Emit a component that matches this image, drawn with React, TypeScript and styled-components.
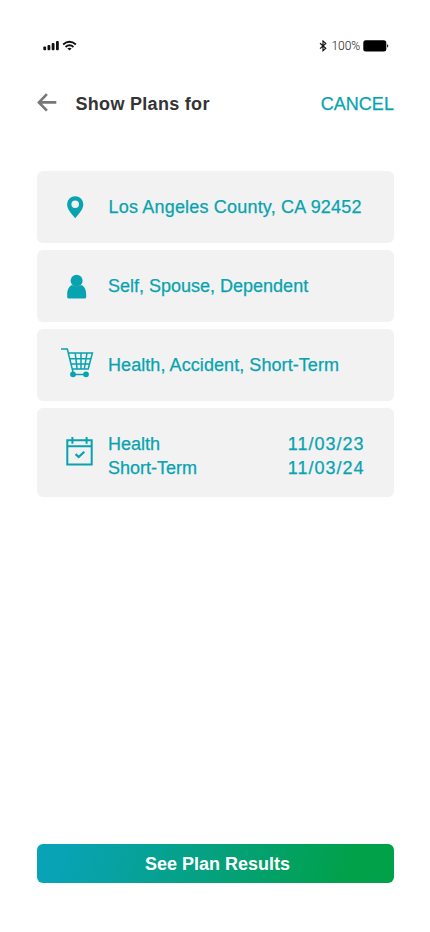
import React from 'react';
import styled, { createGlobalStyle } from 'styled-components';

const TEAL = '#08a3b0';

const GlobalStyle = createGlobalStyle`
  *, *::before, *::after { box-sizing: border-box; }
  body { margin: 0; background: #fff; }
`;

const Screen = styled.div`
  width: 430px;
  height: 932px;
  padding: 36px 36px 49px 37px;
  display: flex;
  flex-direction: column;
  background: #fff;
  font-family: 'Liberation Sans', Arial, sans-serif;
  font-size: 18px;
`;

const StatusBar = styled.div`
  height: 20px;
  padding: 0 5px 0 5.5px;
  display: flex;
  align-items: center;
  justify-content: space-between;
`;

const StatusGroup = styled.div`
  display: flex;
  align-items: center;
`;

const BatteryLevel = styled.span`
  margin: 0 3px 0 5px;
  font: 300 12px/20px Roboto, sans-serif;
  letter-spacing: -0.1px;
  color: #111;
`;

const Header = styled.header`
  height: 30px;
  margin-top: 32px;
  display: flex;
  align-items: center;
`;

const IconButton = styled.button`
  width: 38.5px;
  height: 30px;
  padding: 0;
  border: 0;
  background: none;
  display: flex;
  align-items: center;
`;

const Title = styled.h1`
  margin: 0;
  padding-top: 1px;
  flex: 1;
  font-size: 18px;
  line-height: 30px;
  letter-spacing: 0.3px;
  color: #343434;
`;

const CancelButton = styled.button`
  padding: 1px 0 0;
  border: 0;
  background: none;
  font: 18px/30px 'Liberation Sans', Arial, sans-serif;
  letter-spacing: 0.05px;
  color: ${TEAL};
  -webkit-text-stroke: 0.25px ${TEAL};
`;

const CardList = styled.main`
  margin-top: 53px;
  display: flex;
  flex-direction: column;
  gap: 7px;
`;

const Card = styled.section<{ $height?: number }>`
  height: ${({ $height = 72 }) => $height}px;
  padding-right: 30px;
  border-radius: 6px;
  background: #f2f2f2;
  display: flex;
  align-items: center;
  color: ${TEAL};
  -webkit-text-stroke: 0.25px ${TEAL};
`;

const IconSlot = styled.div<{ $left: number; $lift?: number }>`
  width: 71px;
  padding-left: ${({ $left }) => $left}px;
  padding-bottom: ${({ $lift = 0 }) => $lift}px;
  flex: none;
  display: flex;
`;

const Label = styled.span<{ $indent?: number; $tracking?: number }>`
  margin-left: ${({ $indent = 0 }) => $indent}px;
  letter-spacing: ${({ $tracking = 0.07 }) => $tracking}px;
  line-height: 24px;
  white-space: nowrap;
`;

const DateRows = styled.dl`
  flex: 1;
  margin: 6px 0 0;
`;

const DateRow = styled.div`
  display: flex;
  justify-content: space-between;
  line-height: 24px;
`;

const Term = styled.dt`
  letter-spacing: 0;
`;

const DateValue = styled.dd`
  margin: 0 -0.5px 0 0;
  letter-spacing: 1px;
`;

const ResultsButton = styled.button`
  height: 39px;
  margin-top: auto;
  padding: 1px 0 0 4px;
  border: 0;
  border-radius: 6px;
  background: linear-gradient(105deg, #08a3b5 8%, #05a184 45%, #00a148 88%);
  color: #fff;
  font: bold 18px/38px 'Liberation Sans', Arial, sans-serif;
`;

const Svg = styled.svg`
  display: block;
  flex: none;
  overflow: visible;
`;

const SignalIcon = () => (
  <Svg width="34" height="12" viewBox="0 0 34 12" fill="#111">
    <rect x="0.3" y="6.6" width="2.8" height="3.6" rx="1" />
    <rect x="4.5" y="5" width="2.8" height="5.2" rx="1" />
    <rect x="8.7" y="3" width="2.8" height="7.2" rx="1" />
    <rect x="13" y="1" width="2.8" height="9.2" rx="1" />
    <g fill="none" stroke="#111" strokeWidth="1.9">
      <path d="M20.1 4.4Q26.5-.7 32.9 4.4" />
      <path d="M22.5 7Q26.5 3.7 30.5 7" />
    </g>
    <path d="M24.4 8.4Q26.5 7 28.6 8.4L26.5 10.4Z" />
  </Svg>
);

const BluetoothIcon = () => (
  <Svg width="8" height="12" viewBox="0 0 8 12" fill="none" stroke="#111" strokeWidth="1.15">
    <path d="M1 3.2 6.8 8.2 4 10.7V1L6.8 3.4 1 8.6" />
  </Svg>
);

const BatteryIcon = () => (
  <Svg width="26" height="12" viewBox="0 0 26 12" fill="#000">
    <rect x="0.3" y="0.2" width="23" height="11.2" rx="2.5" />
    <path d="M24.2 3.9Q26.4 5.8 24.2 7.7Z" />
  </Svg>
);

const BackIcon = () => (
  <Svg width="20" height="20" viewBox="0 0 20 20" fill="none" stroke="#777" strokeWidth="2.6">
    <path d="M19.3 9.4H2M9.9 1.1 1.9 9.4l8 8.2" />
  </Svg>
);

const PinIcon = () => (
  <Svg width="17" height="23" viewBox="0 0 17 23" fill={TEAL}>
    <path fillRule="evenodd" d="M8.2.2A8.1 8.1 0 0 0 .1 8.3C.1 12.5 2.8 16.1 8.2 22.3 13.6 16.1 16.3 12.5 16.3 8.3A8.1 8.1 0 0 0 8.2.2Zm0 4.3a3.8 3.8 0 1 1 0 7.6 3.8 3.8 0 0 1 0-7.6Z" />
  </Svg>
);

const PersonIcon = () => (
  <Svg width="20" height="23" viewBox="0 0 20 23" fill={TEAL}>
    <circle cx="9.6" cy="5.8" r="6" />
    <path d="M4.9 10Q9.7 12.7 14.5 10C18 11.8 19.2 15.5 19.2 19.5V22Q19.2 23.6 17.6 23.6H1.8Q.2 23.6 .2 22V19.5C.2 15.5 1.4 11.8 4.9 10Z" />
  </Svg>
);

const CartIcon = () => (
  <Svg width="33" height="30" viewBox="0 0 33 30" fill="none" stroke={TEAL} strokeWidth="1.5">
    <path d="M0 1H6.3L12.6 26.5H25.3M7.3 5H31.4L27.2 21H11.2M8.8 10.8H29.9M10.1 16H28.5M14.2 5 16.1 21M20 5V21M26 5 23.3 21" />
    <circle cx="12" cy="26.3" r="2.9" fill={TEAL} stroke="none" />
    <circle cx="25" cy="26.3" r="2.9" fill={TEAL} stroke="none" />
  </Svg>
);

const CalendarIcon = () => (
  <Svg width="28" height="29" viewBox="0 0 28 29" fill="none" stroke={TEAL} strokeWidth="2">
    <path d="M1.3 3.2H25.7V27.4H1.3ZM1.3 9.2H25.7M6.4 0V6.8M20.6 0V6.8" />
    <path d="M9.6 17.1 12.7 20.1 18.3 14.8" strokeWidth="2.2" />
  </Svg>
);

const coverageDates = [
  { name: 'Health', date: '11/03/23' },
  { name: 'Short-Term', date: '11/03/24' },
];

export default function App() {
  return (
    <Screen>
      <GlobalStyle />
      <StatusBar>
        <SignalIcon />
        <StatusGroup>
          <BluetoothIcon />
          <BatteryLevel>100%</BatteryLevel>
          <BatteryIcon />
        </StatusGroup>
      </StatusBar>
      <Header>
        <IconButton aria-label="Back"><BackIcon /></IconButton>
        <Title>Show Plans for</Title>
        <CancelButton>CANCEL</CancelButton>
      </Header>
      <CardList>
        <Card>
          <IconSlot $left={30}><PinIcon /></IconSlot>
          <Label $indent={0.5} $tracking={0.19}>Los Angeles County, CA 92452</Label>
        </Card>
        <Card>
          <IconSlot $left={30}><PersonIcon /></IconSlot>
          <Label $tracking={0}>Self, Spouse, Dependent</Label>
        </Card>
        <Card>
          <IconSlot $left={23.5} $lift={5}><CartIcon /></IconSlot>
          <Label>Health, Accident, Short-Term</Label>
        </Card>
        <Card $height={89}>
          <IconSlot $left={28.5} $lift={3}><CalendarIcon /></IconSlot>
          <DateRows>
            {coverageDates.map(({ name, date }) => (
              <DateRow key={name}>
                <Term>{name}</Term>
                <DateValue>{date}</DateValue>
              </DateRow>
            ))}
          </DateRows>
        </Card>
      </CardList>
      <ResultsButton>See Plan Results</ResultsButton>
    </Screen>
  );
}
